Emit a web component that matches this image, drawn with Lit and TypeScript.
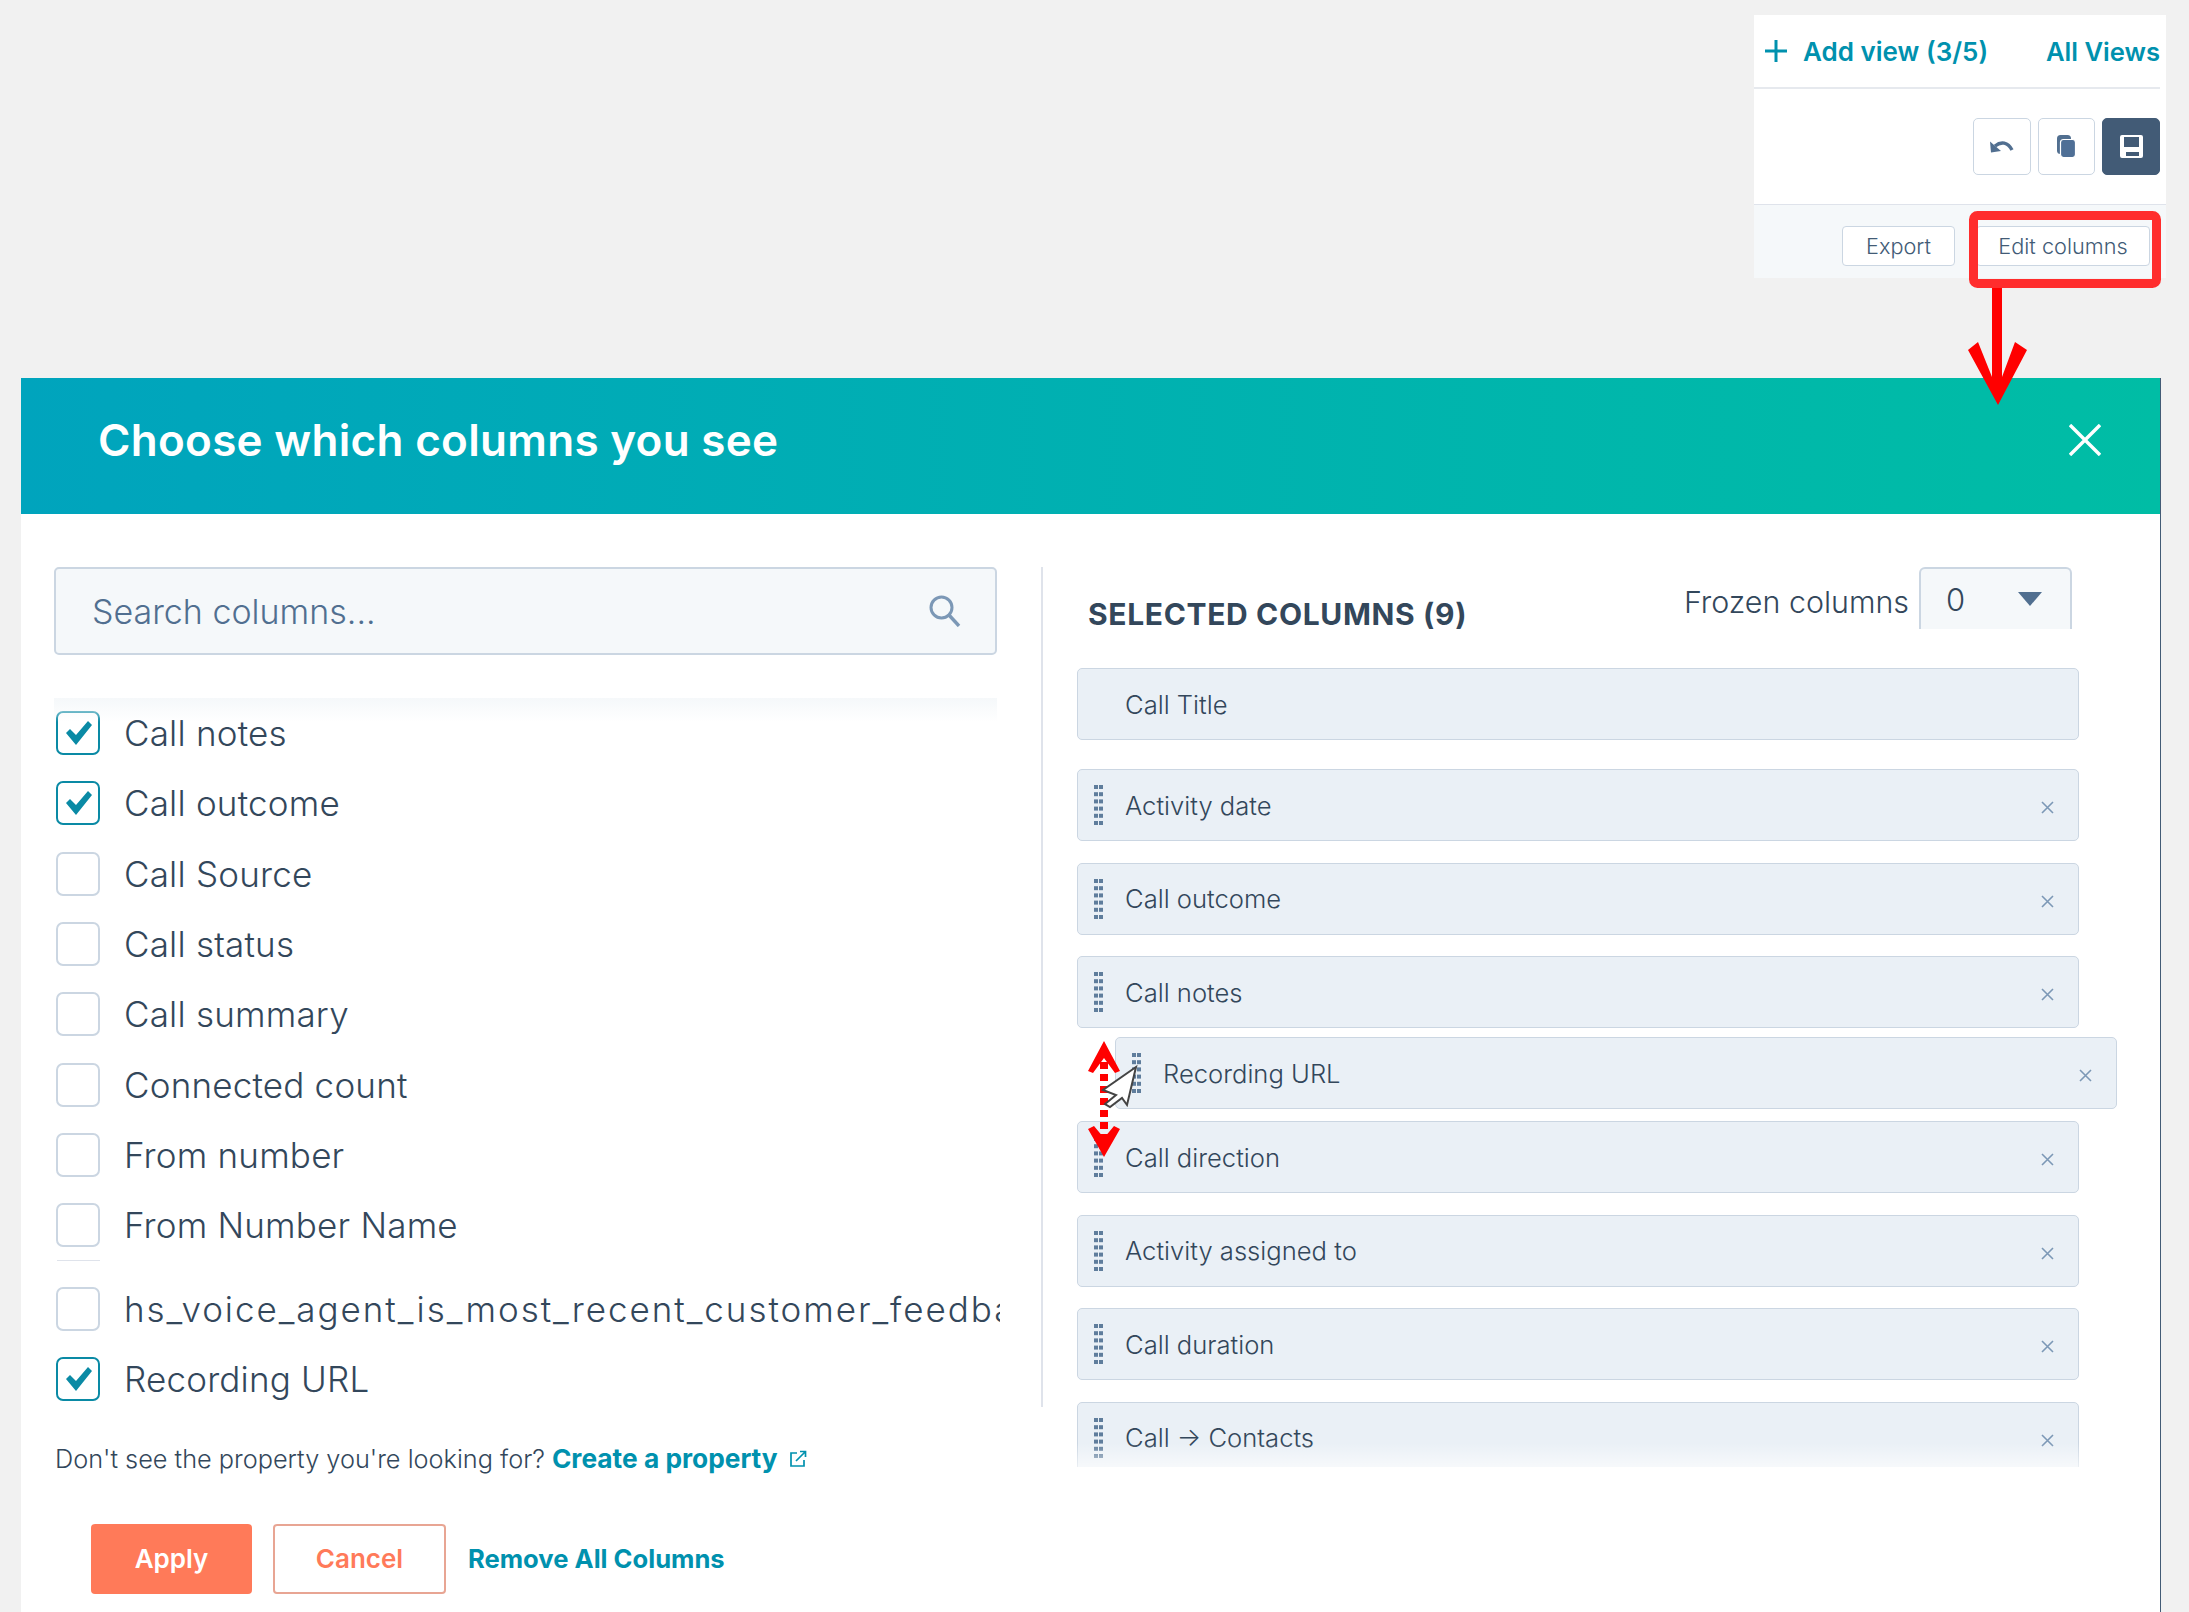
import { LitElement, html, css, svg } from "lit";
import { customElement } from "lit/decorators.js";

const grip = html`<svg class="grip" width="9" height="40" viewBox="0 0 9 40">
  ${[0, 7.2, 14.4, 21.6, 28.8, 36].map(
    (y) => svg`<rect x="0" y="${y}" width="4" height="4"/><rect x="5" y="${y}" width="4" height="4"/>`
  )}
</svg>`;

const xIcon = html`<svg class="x" width="13" height="13" viewBox="0 0 13 13"><path d="M1 1l11 11M12 1L1 12"/></svg>`;

const check = html`<svg width="29" height="26" viewBox="0 0 29 26" class="tick"><path d="M2 13l4-4 6 6L24 1l4 4-16 20z"/></svg>`;

@customElement("app-root")
export class AppRoot extends LitElement {
  static styles = css`
    :host {
      display: block;
      position: relative;
      width: 2189px;
      height: 1612px;
      overflow: hidden;
      background: #f1f1f1;
      font-family: "Inter", "Liberation Sans", sans-serif;
      color: #33475b;
    }
    .top { display: flex; justify-content: flex-end; height: 378px; padding: 15px 23px 0 0; box-sizing: border-box; }
    .card { width: 412px; height: 263px; background: #fff; display: flex; flex-direction: column; }
    .views {
      height: 74px; flex: none; box-sizing: border-box; margin-right: 6px; border-bottom: 2px solid #e6e9ee;
      display: flex; align-items: center; color: #0091ae; font-size: 26px; font-weight: 600;
      padding: 0 0 0 10px;
    }
    .views svg { margin-right: 15px; }
    .views .all { margin-left: auto; font-size: 25.6px; }
    .actions { height: 115px; flex: none; box-sizing: border-box; padding: 29px 6px 0 0; display: flex; justify-content: flex-end; gap: 7px; }
    .ib { width: 57.6px; height: 57px; box-sizing: border-box; border: 1px solid #cbd6e2; border-radius: 5px; background: #fff; display: flex; align-items: center; justify-content: center; }
    .ib.dark { background: #425b76; border-color: #425b76; }
    .band { flex: 1; background: #f5f8fa; border-top: 1px solid #dfe3eb; display: flex; justify-content: flex-end; align-items: center; gap: 21px; padding: 8px 16px 0 0; }
    .sbtn { height: 40px; box-sizing: border-box; border: 1px solid #cbd6e2; border-radius: 4px; background: #fff; display: flex; align-items: center; justify-content: center; font-size: 21.7px; font-weight: 300; color: #425b76; }
    .sbtn.export { width: 113px; }
    .sbtn.edit { width: 174px; }

    .modal { width: 2140px; height: 1234px; margin-left: 21px; background: #fff; border-right: 1px solid #425b76; box-sizing: border-box; display: flex; flex-direction: column; }
    .head { height: 136px; flex: none; box-sizing: border-box; background: linear-gradient(90deg, #00a4bd, #00bda5); display: flex; align-items: center; justify-content: space-between; padding: 0 59px 12px 77px; color: #fff; font-size: 44px; font-weight: 600; letter-spacing: 0.3px; }
    .body { display: flex; padding-top: 53px; }
    .left { width: 946px; margin-left: 33px; flex: none; }
    .search { width: 943px; height: 88px; box-sizing: border-box; background: #f5f8fa; border: 2px solid #cbd6e2; border-radius: 5px; display: flex; align-items: center; justify-content: space-between; padding: 0 34px 0 36px; font-size: 34px; font-weight: 300; color: #516f90; }
    .list { margin-top: 43px; position: relative; overflow: hidden; }
    .fade-top { position: absolute; left: 0; top: 0; width: 943px; height: 24px; background: linear-gradient(#f5f8fa, rgba(255,255,255,0)); }
    .item { height: 70.3px; display: flex; align-items: center; white-space: nowrap; font-size: 35px; font-weight: 300; letter-spacing: 0.2px; color: #33475b; padding-left: 2px; }
    .item.long { letter-spacing: 1.95px; }
    .box { width: 44px; height: 44px; flex: none; box-sizing: border-box; border: 2px solid #cbd6e2; border-radius: 7px; margin-right: 24px; display: flex; align-items: center; justify-content: center; background: #fff; }
    .box.on { border-color: #0a8aa5; }
    .tick path { fill: #0a8aa5; }
    .cut { width: 43px; height: 1px; background: #dfe3eb; margin: 0 0 12px 3px; }
    .help { margin-top: 27px; font-size: 25.3px; font-weight: 300; line-height: 36px; display: flex; align-items: center; white-space: nowrap; padding-left: 1px; }
    .help b { font-size: 26.3px; font-weight: 700; color: #0091ae; margin-left: 7px; }
    .help svg { margin-left: 11px; }
    .foot { margin-top: 47px; margin-left: 37px; display: flex; align-items: center; }
    .btn { height: 70px; box-sizing: border-box; border-radius: 4px; display: flex; align-items: center; justify-content: center; font-size: 26px; font-weight: 600; }
    .apply { width: 161px; background: #ff7a59; color: #fff; }
    .cancel { width: 173px; margin-left: 21px; background: #fff; border: 2px solid #e8a593; color: #ff7a59; }
    .remove { margin-left: 22px; font-size: 25.6px; font-weight: 700; color: #0091ae; }
    .divider { width: 2px; height: 840px; flex: none; margin-left: 41px; background: #dfe3eb; }
    .right { width: 1040px; margin-left: 34px; flex: none; position: relative; }
    .rhead { width: 1002px; height: 101px; display: flex; align-items: flex-start; }
    .rhead h2 { margin: 30px 0 0 11px; font-size: 30px; line-height: 34px; font-weight: 700; letter-spacing: 0.65px; color: #33475b; }
    .frozen { margin-left: auto; margin-right: 7px; display: flex; align-items: flex-start; }
    .frozen span { margin-top: 16px; line-height: 38px; font-size: 30.4px; font-weight: 300; margin-right: 10px; }
    .select { width: 153px; height: 62px; box-sizing: border-box; background: #f5f8fa; border: 2px solid #cbd6e2; border-bottom: 0; border-radius: 6px 6px 0 0; padding: 0 28px 0 25px; display: flex; align-items: center; justify-content: space-between; font-size: 31px; font-weight: 300; }
    .rows { height: 799px; overflow: hidden; position: relative; display: flex; flex-direction: column; }
    .row { flex: none; width: 1002px; height: 72px; box-sizing: border-box; background: #eaf0f6; border: 1px solid #cbd6e2; border-radius: 5px; display: flex; align-items: center; padding: 0 24px 0 16px; margin-bottom: 21.6px; font-size: 25.6px; font-weight: 300; color: #33475b; }
    .row.fixed { padding-left: 47px; margin-bottom: 29px; }
    .row.after { margin-bottom: 93px; }
    .row.drag { position: absolute; left: 38px; top: 369px; margin: 0; }
    .grip { margin-right: 22px; }
    .grip rect { fill: #5f7d9c; }
    .x { margin-left: auto; margin-top: 5px; }
    .x path { stroke: #7c98b6; stroke-width: 1.6; fill: none; }
    .fade-bottom { position: absolute; left: 0; width: 1002px; bottom: 0; height: 24px; background: linear-gradient(rgba(255,255,255,0), rgba(255,255,255,.6)); }
    .annot { position: absolute; left: 0; top: 0; pointer-events: none; }
  `;

  render() {
    const left: [string, boolean][] = [
      ["Call notes", true], ["Call outcome", true], ["Call Source", false], ["Call status", false],
      ["Call summary", false], ["Connected count", false], ["From number", false], ["From Number Name", false],
    ];
    const item = (t: string, on: boolean, cls = "") => html`<div class="item ${cls}"><span class="box ${on ? "on" : ""}">${on ? check : ""}</span>${t}</div>`;
    const row = (t: string, cls = "") => html`<div class="row ${cls}">${grip}<span>${t}</span>${xIcon}</div>`;
    return html`
      <div class="top">
        <div class="card">
          <div class="views">
            <svg width="24" height="24" viewBox="0 0 24 24"><path d="M12 1v22M1 12h22" stroke="#0091ae" stroke-width="3" fill="none"/></svg>
            <span>Add view (3/5)</span><span class="all">All Views</span>
          </div>
          <div class="actions">
            <div class="ib"><svg width="24" height="16" viewBox="0 0 24 16"><path d="M5 7c6-5 13-4 17 4" fill="none" stroke="#516f90" stroke-width="3.4"/><path d="M0 2.500l1 11 10-1.500z" fill="#516f90"/></svg></div>
            <div class="ib"><svg width="19" height="23" viewBox="0 0 19 23"><rect x="0" y="0" width="14" height="19" rx="3.500" fill="#516f90"/><rect x="3.500" y="4.500" width="15" height="18" rx="3" fill="#4f6f96" stroke="#fff" stroke-width="1.200"/></svg></div>
            <div class="ib dark"><svg width="23" height="23" viewBox="0 0 23 23"><path fill="#fff" fill-rule="evenodd" d="M2 0h19a2 2 0 0 1 2 2v19a2 2 0 0 1-2 2H2a2 2 0 0 1-2-2V2a2 2 0 0 1 2-2zm2 2v10h15V2zm2 15v4h13v-4z"/></svg></div>
          </div>
          <div class="band">
            <div class="sbtn export">Export</div>
            <div class="sbtn edit">Edit columns</div>
          </div>
        </div>
      </div>
      <div class="modal">
        <div class="head">
          <span>Choose which columns you see</span>
          <svg width="32" height="32" viewBox="0 0 32 32"><path d="M1 1l30 30M31 1L1 31" stroke="#fff" stroke-width="3.4" fill="none"/></svg>
        </div>
        <div class="body">
          <div class="left">
            <div class="search">
              <span>Search columns...</span>
              <svg width="32" height="32" viewBox="0 0 32 32"><circle cx="12.5" cy="12.5" r="10.5" fill="none" stroke="#7c98b6" stroke-width="3"/><path d="M20 20l10 11" stroke="#7c98b6" stroke-width="3.4" fill="none"/></svg>
            </div>
            <div class="list">
              ${left.map(([t, on]) => item(t, on))}
              <div class="cut"></div>
              ${item("hs_voice_agent_is_most_recent_customer_feedback", false, "long")}
              ${item("Recording URL", true)}
              <div class="fade-top"></div>
            </div>
            <div class="help">Don't see the property you're looking for? <b>Create a property</b>
              <svg width="18" height="18" viewBox="0 0 18 18"><path d="M8 3H2v13h13v-6M7 11L16 2M11 1.500h5.500V7" fill="none" stroke="#0091ae" stroke-width="1.700"/></svg>
            </div>
            <div class="foot">
              <div class="btn apply">Apply</div>
              <div class="btn cancel">Cancel</div>
              <div class="remove">Remove All Columns</div>
            </div>
          </div>
          <div class="divider"></div>
          <div class="right">
            <div class="rhead">
              <h2>SELECTED COLUMNS (9)</h2>
              <div class="frozen">
                <span>Frozen columns</span>
                <div class="select">0<svg width="24" height="14" viewBox="0 0 24 14"><path d="M0 0h24L12 14z" fill="#516f90"/></svg></div>
              </div>
            </div>
            <div class="rows">
              <div class="row fixed"><span>Call Title</span></div>
              ${row("Activity date")}
              ${row("Call outcome")}
              ${row("Call notes", "after")}
              ${row("Call direction")}
              ${row("Activity assigned to")}
              ${row("Call duration")}
              ${row("Call → Contacts")}
              ${row("Recording URL", "drag")}
              <div class="fade-bottom"></div>
            </div>
          </div>
        </div>
      </div>
      <svg class="annot" width="2189" height="1612" viewBox="0 0 2189 1612">
        <rect x="1973.500" y="215.500" width="183" height="68" rx="4" fill="none" stroke="#ff2d2d" stroke-width="9"/>
        <path d="M1992 288H2002V377L2015 342L2027 350L1998 405L1968 350L1978 342L1992 377z" fill="#ff0000"/>
        <path d="M1104 1062V1140" stroke="#ff0000" stroke-width="8" stroke-dasharray="7 5" fill="none"/>
        <path d="M1104 1041L1120 1071L1115 1073L1104 1058L1093 1073L1088 1071z" fill="#ff0000"/>
        <path d="M1104 1157L1088 1129L1094 1126L1104 1138L1114 1126L1120 1129z" fill="#ff0000"/>
        <path d="M1136 1067L1103 1090L1116 1095L1105 1104L1110 1107L1122 1098L1127 1105z" fill="#fff" stroke="#444" stroke-width="2"/>
      </svg>
    `;
  }
}
